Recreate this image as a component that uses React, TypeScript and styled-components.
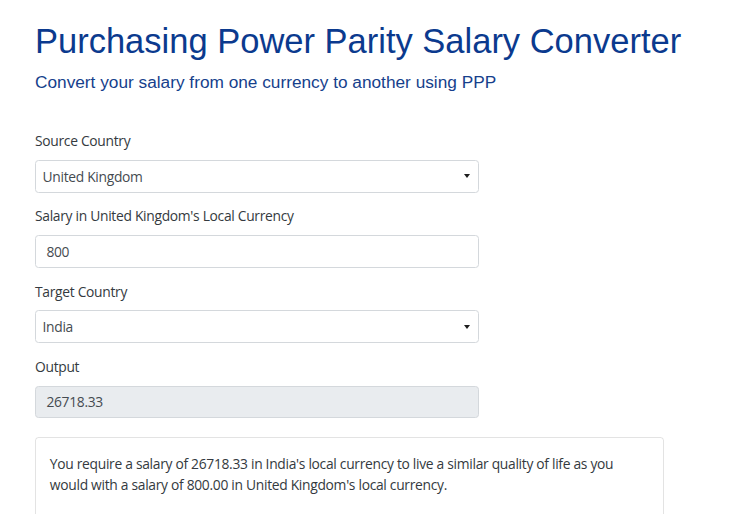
import { useState } from 'react';
import { createGlobalStyle, styled } from 'styled-components';

const GlobalStyle = createGlobalStyle`
  html, body {
    margin: 0;
    padding: 0;
    background: #ffffff;
  }
  body {
    font-family: 'Open Sans', 'Noto Sans', sans-serif;
    font-size: 13.84px;
    line-height: 1.5;
    color: #333a40;
  }
  * {
    box-sizing: border-box;
  }
`;

const countries = ['United Kingdom', 'India', 'United States', 'Germany', 'Japan'];

export default function App() {
  const [source, setSource] = useState('United Kingdom');
  const [salary, setSalary] = useState('800');
  const [target, setTarget] = useState('India');

  return (
    <>
      <GlobalStyle />
      <Page>
        <Title>Purchasing Power Parity Salary Converter</Title>
        <Subtitle>Convert your salary from one currency to another using PPP</Subtitle>

        <Form>
          <FormGroup>
            <Label>Source Country</Label>
            <SelectWrapper>
              <Select value={source} onChange={(e) => setSource(e.target.value)}>
                {countries.map((c) => (
                  <option key={c}>{c}</option>
                ))}
              </Select>
            </SelectWrapper>
          </FormGroup>

          <FormGroup>
            <Label>Salary in {source}'s Local Currency</Label>
            <Input value={salary} onChange={(e) => setSalary(e.target.value)} />
          </FormGroup>

          <FormGroup>
            <Label>Target Country</Label>
            <SelectWrapper>
              <Select value={target} onChange={(e) => setTarget(e.target.value)}>
                {countries.map((c) => (
                  <option key={c}>{c}</option>
                ))}
              </Select>
            </SelectWrapper>
          </FormGroup>

          <FormGroup>
            <Label>Output</Label>
            <Input value="26718.33" disabled $readonly />
          </FormGroup>
        </Form>

        <ResultCard>
          <ResultText>
            You require a salary of 26718.33 in {target}'s local currency to live a similar
            quality of life as you would with a salary of 800.00 in {source}'s local currency.
          </ResultText>
        </ResultCard>
      </Page>
    </>
  );
}

const Page = styled.div`
  padding: 21px 0 0 35px;
`;

const Title = styled.h1`
  margin: 0;
  white-space: nowrap;
  font-family: 'Liberation Sans', Arial, sans-serif;
  font-weight: 400;
  font-size: 34.5px;
  line-height: 1.2;
  color: #0b3a8e;
`;

const Subtitle = styled.h2`
  margin: 10px 0 0 0;
  font-family: 'Liberation Sans', Arial, sans-serif;
  font-weight: 400;
  font-size: 17.25px;
  line-height: 1.2;
  color: #163f8c;
`;

const Form = styled.form`
  margin-top: 38px;
  width: 444px;
`;

const FormGroup = styled.div`
  display: flex;
  flex-direction: column;
  margin-bottom: 13.84px;
`;

const Label = styled.label`
  margin-bottom: 7.9px;
  letter-spacing: -0.3px;
  line-height: 20.76px;
  color: #343a40;
`;

const SelectWrapper = styled.div`
  position: relative;

  &::after {
    content: '';
    position: absolute;
    right: 9px;
    top: 50%;
    margin-top: -2px;
    border-left: 3.5px solid transparent;
    border-right: 3.5px solid transparent;
    border-top: 4.5px solid #1d1d1d;
    pointer-events: none;
  }
`;

const fieldBase = `
  width: 100%;
  height: 32.8px;
  border: 1px solid #d4d8dc;
  border-radius: 3.5px;
  font-family: 'Open Sans', 'Noto Sans', sans-serif;
  font-size: 13.84px;
  letter-spacing: -0.3px;
  color: #454b51;
  background: #ffffff;
  outline: none;
  margin: 0;
`;

const Select = styled.select`
  ${fieldBase}
  appearance: none;
  -webkit-appearance: none;
  padding: 0 24px 0 6.5px;
`;

const Input = styled.input<{ $readonly?: boolean }>`
  ${fieldBase}
  padding: 0 10.4px;
  background: ${({ $readonly }) => ($readonly ? '#e9ecef' : '#ffffff')};
  opacity: 1;
  -webkit-text-fill-color: #454b51;
`;

const ResultCard = styled.div`
  margin-top: 19px;
  width: 629px;
  border: 1px solid rgba(0, 0, 0, 0.11);
  border-radius: 3.5px;
  padding: 16px 13.84px 18px 13.84px;
`;

const ResultText = styled.p`
  margin: 0 0 13.84px 0;
  letter-spacing: -0.3px;
  line-height: 20.76px;
  color: #343a40;
`;
